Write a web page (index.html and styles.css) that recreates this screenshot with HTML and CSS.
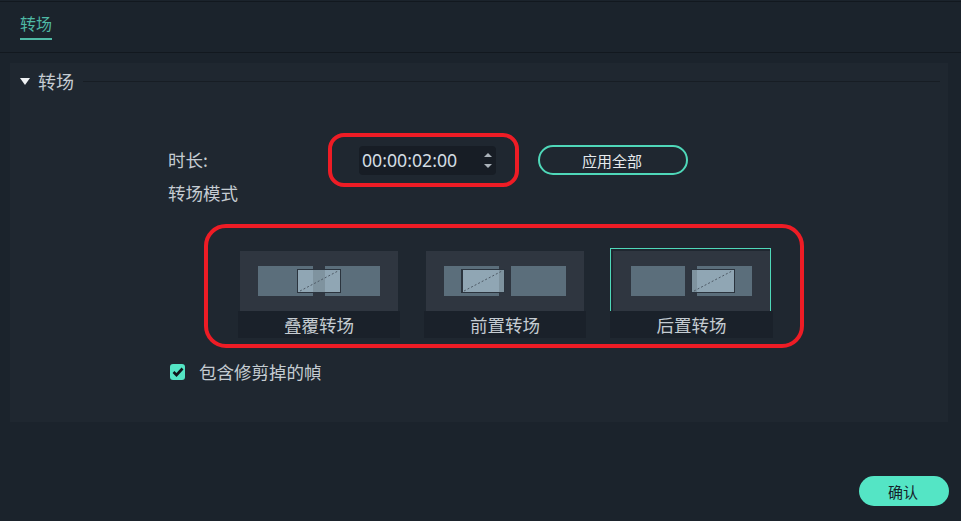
FILE: index.html
```html
<!DOCTYPE html>
<html lang="zh-CN">
<head>
    <meta charset="UTF-8">
    <title>转场</title>
    <link rel="stylesheet" href="styles.css">
</head>
<body>

<div class="tabs">
    <div class="tab">转场</div>
</div>

<div class="panel">
    <div class="panel-head">
        <span class="arrow"></span>
        <span class="panel-title">转场</span>
        <span class="panel-line"></span>
    </div>

    <div class="row">
        <div class="row-label">时长:</div>
        <div class="time-box">
            <span class="time">00:00:02:00</span>
            <div class="spin">
                <span class="spin-up"></span>
                <span class="spin-down"></span>
            </div>
        </div>
        <button class="apply-btn">应用全部</button>
    </div>

    <div class="mode-label">转场模式</div>

    <div class="cards">
        <div class="card">
            <svg class="thumb" width="158" height="60" viewBox="0 0 158 60">
                <rect width="158" height="60" fill="#2f3640"/>
                <rect x="18" y="15" width="55" height="30" fill="#5b6e7b"/>
                <rect x="85" y="15" width="55" height="30" fill="#5b6e7b"/>
                <rect x="57" y="18" width="44" height="24" fill="#2b343e"/>
                <rect x="58" y="19" width="42" height="22" fill="#7f939f"/>
                <rect x="58" y="19" width="15" height="22" fill="#90a6b4"/>
                <rect x="85" y="19" width="15" height="22" fill="#90a6b4"/>
                <path d="M60 40 L98 20" stroke="#4e5a66" stroke-dasharray="2 2"/>
            </svg>
            <div class="card-label">叠覆转场</div>
        </div>
        <div class="card">
            <svg class="thumb" width="158" height="60" viewBox="0 0 158 60">
                <rect width="158" height="60" fill="#2f3640"/>
                <rect x="18" y="15" width="55" height="30" fill="#5b6e7b"/>
                <rect x="85" y="15" width="55" height="30" fill="#5b6e7b"/>
                <rect x="35" y="18" width="44" height="24" fill="#2b343e"/>
                <rect x="37" y="19" width="41" height="22" fill="#90a6b4"/>
                <rect x="73" y="19" width="5" height="22" fill="#7f939f"/>
                <path d="M38 40 L76 20" stroke="#4e5a66" stroke-dasharray="2 2"/>
            </svg>
            <div class="card-label">前置转场</div>
        </div>
        <div class="card card-active">
            <svg class="thumb" width="158" height="60" viewBox="0 0 158 60">
                <rect width="158" height="60" fill="#2f3640"/>
                <rect x="18" y="15" width="54" height="30" fill="#5b6e7b"/>
                <rect x="84" y="15" width="55" height="30" fill="#5b6e7b"/>
                <rect x="78" y="18" width="44" height="24" fill="#2b343e"/>
                <rect x="79" y="19" width="42" height="22" fill="#90a6b4"/>
                <rect x="79" y="19" width="5" height="22" fill="#7f939f"/>
                <path d="M81 40 L119 20" stroke="#4e5a66" stroke-dasharray="2 2"/>
            </svg>
            <div class="card-label">后置转场</div>
        </div>
    </div>

    <label class="check-row">
        <span class="check">
            <svg width="12" height="10" viewBox="0 0 12 10">
                <path d="M1.5 5 L4.5 8 L10.5 1.5" fill="none" stroke="#10151a" stroke-width="2.6"/>
            </svg>
        </span>
        包含修剪掉的幀
    </label>

    <div class="mark mark-time"></div>
    <div class="mark mark-cards"></div>
</div>

<div class="footer">
    <button class="ok-btn">确认</button>
</div>

</body>
</html>
```

FILE: styles.css
```css
html, body {
    height: 100%;
}
body {
    margin: 0;
    background-color: #1b232c;
    font-family: "Noto Sans CJK SC", "Noto Sans", sans-serif;
    color: #c5ccd2;
    overflow: hidden;
}
.tabs {
    height: 50px;
    padding-left: 20px;
    border-top: 1px solid #12181f;
    border-bottom: 1px solid #12181f;
    margin-top: 1px;
}
.tab {
    width: 32px;
    height: 26px;
    padding-top: 10px;
    border-bottom: 2px solid #4fb9a5;
    font-size: 16px;
    line-height: 22px;
    color: #4fb9a5;
}
.panel {
    position: relative;
    margin: 10px 13px 0 10px;
    height: 359px;
    background-color: #1f2730;
    box-sizing: border-box;
    padding: 6px 0 0 10px;
}
.panel-head {
    display: flex;
    align-items: center;
    height: 24px;
    margin-right: 8px;
}
.arrow {
    width: 0;
    height: 0;
    border-left: 5px solid transparent;
    border-right: 5px solid transparent;
    border-top: 7px solid #eef1f3;
}
.panel-title {
    font-size: 18px;
    line-height: 24px;
    margin-left: 8px;
}
.panel-line {
    flex: 1;
    height: 1px;
    margin-left: 9px;
    background-color: #171d24;
}
.row {
    display: flex;
    align-items: center;
    margin: 52px 0 0 148px;
    height: 30px;
}
.row-label {
    width: 191px;
    font-size: 17.5px;
    line-height: 30px;
}
.time-box {
    display: flex;
    align-items: center;
    justify-content: space-between;
    width: 137px;
    height: 29px;
    padding: 0 4px 0 3px;
    box-sizing: border-box;
    background-color: #171d25;
    border-radius: 4px;
}
.time {
    font-family: "Noto Sans", sans-serif;
    font-size: 17.7px;
    color: #d4dde3;
}
.spin {
    display: flex;
    flex-direction: column;
    gap: 7px;
}
.spin-up, .spin-down {
    width: 0;
    height: 0;
    border-left: 4px solid transparent;
    border-right: 4px solid transparent;
}
.spin-up {
    border-bottom: 4px solid #aab2b9;
}
.spin-down {
    border-top: 4px solid #aab2b9;
}
.apply-btn {
    width: 150px;
    height: 30px;
    margin-left: 42px;
    padding: 0 2px 0 0;
    border: 2px solid #4fd8b9;
    border-radius: 15px;
    background: none;
    color: #e6eaed;
    font-family: inherit;
    font-size: 15px;
}
.mode-label {
    margin: 3px 0 0 148px;
    font-size: 17.5px;
    line-height: 30px;
}
.cards {
    display: flex;
    margin: 43px 0 0 218px;
    gap: 24px;
}
.card {
    position: relative;
    width: 162px;
}
.thumb {
    display: block;
    margin-left: 2px;
}
.card-label {
    height: 27px;
    background-color: #1a212a;
    text-align: center;
    font-size: 17.5px;
    line-height: 27px;
}
.card-active {
    width: 163px;
}
.card-active .thumb {
    margin-left: 3px;
}
.card-active::before {
    content: "";
    position: absolute;
    left: 0;
    width: 161px;
    top: -3px;
    height: 63px;
    box-sizing: border-box;
    border: 1px solid #4fd8b9;
    border-bottom: none;
}
.check-row {
    display: flex;
    align-items: center;
    margin: 21px 0 0 150px;
    font-size: 17.5px;
    line-height: 26px;
}
.check {
    display: flex;
    align-items: center;
    justify-content: center;
    width: 15px;
    height: 16px;
    margin-right: 14px;
    background-color: #54e5c5;
    border-radius: 3px;
}
.mark {
    position: absolute;
    box-sizing: border-box;
    border: 4px solid #ee1c25;
}
.mark-time {
    left: 318px;
    top: 70px;
    width: 191px;
    height: 54px;
    border-radius: 16px;
}
.mark-cards {
    left: 194px;
    top: 161px;
    width: 600px;
    height: 124px;
    border-radius: 22px;
}
.footer {
    display: flex;
    justify-content: flex-end;
    margin-top: 54px;
    padding-right: 12px;
}
.ok-btn {
    width: 90px;
    height: 30px;
    padding: 0 2px 0 0;
    border: none;
    border-radius: 15px;
    background-color: #54e5c5;
    color: #16202a;
    font-family: inherit;
    font-size: 15px;
}
```
